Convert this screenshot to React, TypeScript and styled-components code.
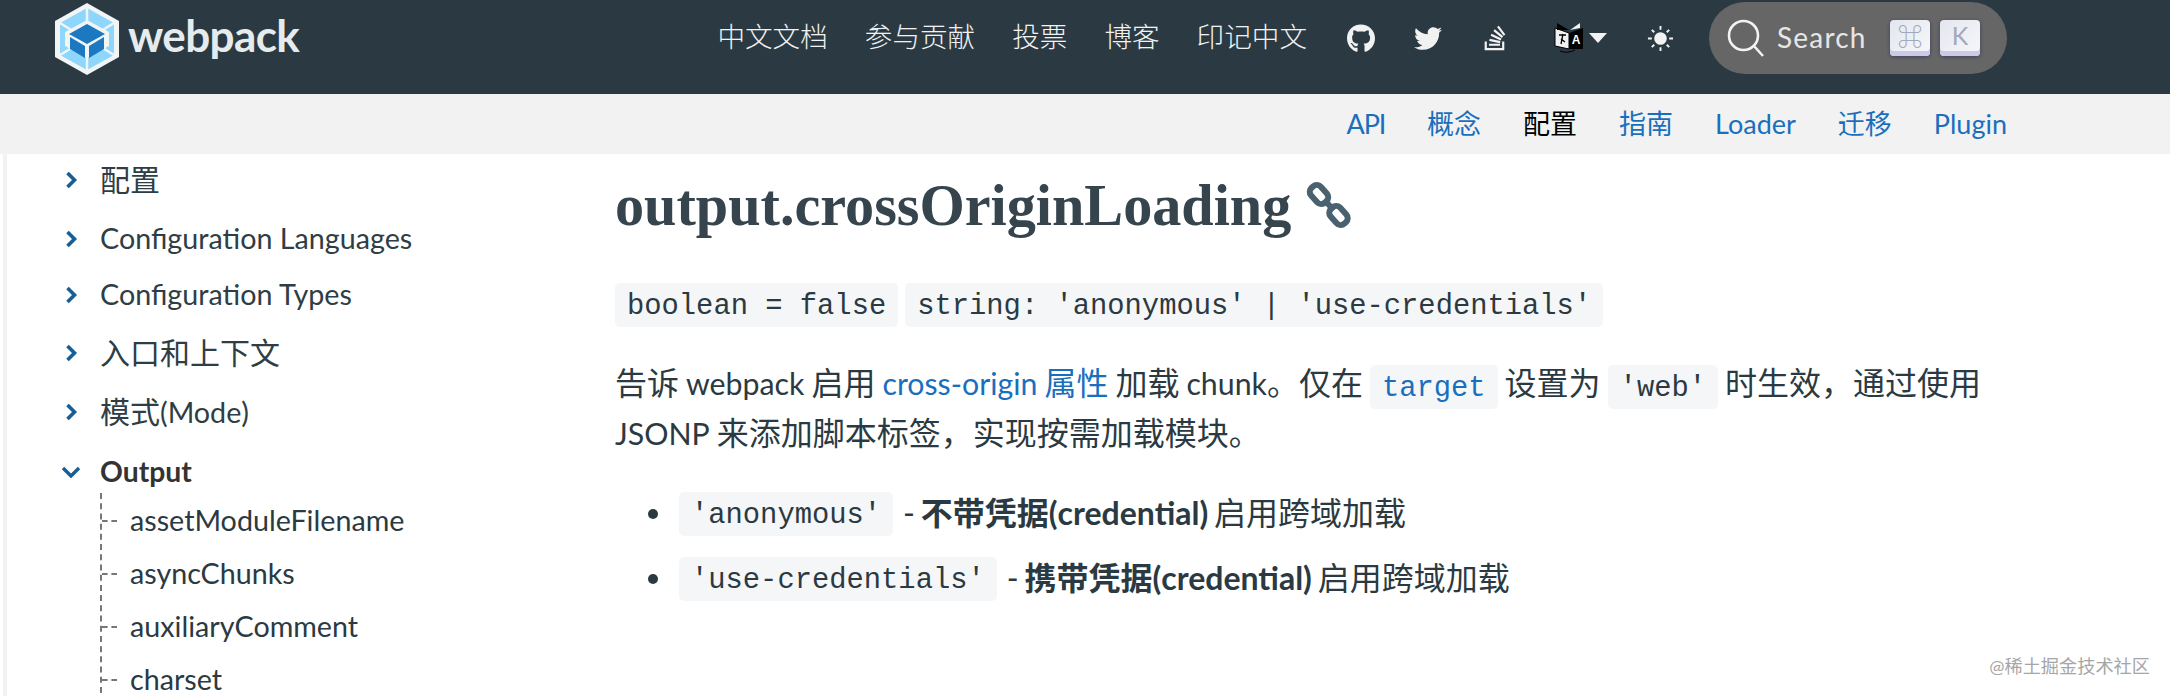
import React from 'react';
import styled, { createGlobalStyle } from 'styled-components';
import { FaGithub, FaTwitter, FaStackOverflow } from 'react-icons/fa';

const Sans = `"Lato", "Noto Sans CJK SC", sans-serif`;
const Global = createGlobalStyle`
  html, body { margin: 0; padding: 0; background: #fff; }
  body { width: 2170px; height: 696px; overflow: hidden; font-family: ${Sans}; }
  * { box-sizing: border-box; }
`;
const Page = styled.div`position: relative; width: 2170px; height: 696px; overflow: hidden; display: flex; flex-direction: column;`;
const Header = styled.header`
  height: 94px; flex: none; background: #2b3a42; display: flex; align-items: center; padding: 0 163px 18px 55px;
`;
const Logo = styled.div`display: flex; align-items: center; gap: 9px; margin-right: auto; margin-top: 1px;`;
const Wordmark = styled.span`
  font-family: "Lato", sans-serif; font-weight: 700; font-size: 44px; letter-spacing: -0.6px; line-height: 50px; color: #e6ecee; margin-top: -8px;
`;
const TopNav = styled.nav`display: flex; align-items: center; gap: 37px; margin-right: 40px; margin-top: -3px;`;
const TopLink = styled.a`font-size: 27.6px; line-height: 40px; color: #f2f2f2; font-weight: 300;`;
const IconRow = styled.div`display: flex; align-items: center; margin-right: 35px; color: #f2f2f2;`;
const IconSlot = styled.span<{ $w: number; $gap: number; $size?: number }>`
  display: flex; align-items: center; justify-content: center; width: ${p => p.$w}px; margin-right: ${p => p.$gap}px; font-size: ${p => p.$size ?? 29}px;
`;
const Caret = styled.span`width: 0; height: 0; border-left: 9px solid transparent; border-right: 9px solid transparent; border-top: 10px solid #f2f2f2; margin: 0 40px 0 5px;`;
const SearchPill = styled.div`
  width: 298px; height: 72px; border-radius: 36px; background: #666; display: flex; align-items: center; padding: 0 0 0 17px;
`;
const SearchLabel = styled.span`font-size: 28px; letter-spacing: 1.2px; line-height: 34px; margin: -3px 0 0 11px; color: #e6e6e6; width: 113px;`;
const Key = styled.kbd`
  width: 40px; height: 36px; margin-right: 10px; border-radius: 4px; display: flex; align-items: center; justify-content: center; padding-bottom: 6px;
  font-family: ${Sans}; font-size: 25px; font-weight: 700; color: #a3a9bd;
  background: linear-gradient(-225deg, #e3e6ee, #f7f8fa);
  box-shadow: inset 0 -5px 0 0 #cbcae6, 0 1px 3px 1px rgba(30,35,90,.35);
`;
const KeyLetter = styled.span`font-weight: 400;`;
const SubNav = styled.nav`
  height: 60px; flex: none; background: #f2f2f2; display: flex; justify-content: flex-end; align-items: center; gap: 42px; padding-right: 163px;
`;
const SubLink = styled.a<{ $active?: boolean; $tight?: boolean }>`
  font-size: 27px; line-height: 40px; color: ${p => p.$active ? '#000' : '#1a6fbd'}; letter-spacing: ${p => p.$tight ? '-1.2px' : '0'};
`;
const Body = styled.div`flex: 1; display: flex; min-height: 0;`;
const Side = styled.aside`
  width: 612px; flex: none; margin-left: 3px; border-left: 4px solid #f2f2f2; padding: 3px 0 0 58px;
`;
const SideRow = styled.div<{ $h: number; $bold?: boolean }>`
  display: flex; align-items: flex-start; height: ${p => p.$h}px; line-height: 44px; font-size: 30px; color: ${p => p.$bold ? '#333' : '#2f3d45'}; font-weight: ${p => p.$bold ? 700 : 400};
`;
const SideLatin = styled.span<{ $bold?: boolean }>`font-size: ${p => p.$bold ? 28.3 : 28.7}px;`;
const ChevronRight = styled.svg`width: 13px; height: 18px; margin: 14px 22px 0 0; flex: none;`;
const ChevronDown = styled.svg`width: 20px; height: 12px; margin: 17px 19px 0 -4px; flex: none;`;
const Tree = styled.div`margin-left: 35px; border-left: 2px dashed #777; height: 200px;`;
const TreeList = styled.div`margin-top: -6px;`;
const TreeRow = styled.div`
  height: 53px; display: flex; align-items: center; padding-left: 28px; font-size: 28.7px; color: #2b3a42; position: relative;
  &::before { content: ""; position: absolute; left: 0; top: 27px; width: 15px; border-top: 2px dashed #777; }
`;
const Main = styled.main`flex: 1; color: #2b3a42; min-width: 0;`;
const Title = styled.h1`
  margin: 16px 0 0; display: flex; align-items: center; gap: 14px; font-family: "Liberation Serif", serif; font-weight: 700; font-size: 58.2px; line-height: 72px; color: #36454d;
`;
const CodeRow = styled.div`display: flex; gap: 7px; margin-top: 41px;`;
const Code = styled.code`
  display: inline-block; font-family: "Liberation Mono", "DejaVu Sans Mono", monospace; font-size: 28.8px; line-height: 47px; height: 44px; padding: 0 12px; border-radius: 5px; background: #f5f6f8; color: #2b3a42; white-space: pre;
`;
const InlineCode = styled(Code)<{ $link?: boolean }>`
  vertical-align: middle; color: ${p => p.$link ? '#1a6fbd' : '#2b3a42'};
`;
const Para = styled.p`margin: 32px 0 0; font-size: 32px; line-height: 47px; word-spacing: -1.2px; color: #2b3a42; width: 1400px;`;
const Link = styled.a`color: #1a6fbd;`;
const Latin = styled.span`font-size: 30.3px;`;
const BoldLatin = styled.span`font-size: 32px;`;
const Bullets = styled.ul`margin: 25px 0 0; padding: 0 0 0 64px; list-style: none;`;
const Bullet = styled.li`
  display: flex; align-items: center; gap: 11px; height: 65px; font-size: 32px; position: relative;
  &::before { content: ""; position: absolute; left: -31px; top: 27px; width: 10px; height: 10px; border-radius: 50%; background: #2b3a42; }
  b { font-weight: 700; }
`;
const BulletText = styled.span`line-height: 44px; margin: -2px 0 0 -1px; word-spacing: -2.4px;`;
const Watermark = styled.div`position: absolute; right: 20px; top: 654px; font-size: 18.2px; color: #a6a6a6; line-height: 24px;`;

const Right = () => <ChevronRight viewBox="0 0 13 18"><path d="M2.5 2l7 7-7 7" fill="none" stroke="#175d96" strokeWidth="3.6" /></ChevronRight>;
const Down = () => <ChevronDown viewBox="0 0 20 12"><path d="M2 2l8 8 8-8" fill="none" stroke="#175d96" strokeWidth="3.4" /></ChevronDown>;

const WebpackLogo = () => (
  <svg width="64" height="72" viewBox="0 0 64 72">
    <path d="M32 0L64 18V54L32 72L0 54V18Z" fill="#f2f5f6" />
    <path d="M32 5L59 20V52L32 67L5 52V20Z" fill="#8ed6fb" />
    <path d="M32 5V20M59 20L46 28M5 20L18 28M32 67V52M59 52L46 44M5 52L18 44" stroke="#f2f5f6" strokeWidth="2.5" />
    <path d="M32 17L54 29V43L32 55L10 43V29Z" fill="#f2f5f6" />
    <path d="M32 21L50 31L32 41L14 31Z" fill="#1c78c0" />
    <path d="M15 34L30 43V55L15 46Z" fill="#1c78c0" />
    <path d="M49 34L34 43V55L49 46Z" fill="#1c78c0" />
  </svg>
);
const Translate = () => (
  <svg width="30" height="32" viewBox="0 0 30 32">
    <path d="M1 6L15 11V27L1 24Z" fill="#f2f2f2" stroke="#000" />
    <path d="M15 11L29 6V27L15 27Z" fill="#000" />
    <path d="M3 1L15 8H3Z" fill="#000" /><path d="M16 8L26 1V6Z" fill="#f2f2f2" />
    <text x="22" y="22" fontSize="12" fontWeight="700" textAnchor="middle" fill="#fff" fontFamily="Liberation Sans">A</text>
    <path d="M5 13h7M9 12l-2 10M7 17l4 3" stroke="#000" strokeWidth="1.3" fill="none" />
    <path d="M6 29q7 3 15-1" stroke="#000" strokeWidth="1" fill="none" />
  </svg>
);
const SunIcon = () => (
  <svg width="27" height="27" viewBox="0 0 28 28" fill="#f2f2f2" stroke="#f2f2f2" strokeWidth="2">
    <circle cx="14" cy="14" r="6.5" stroke="none" />
    <path d="M14 1v4M14 23v4M1 14h4M23 14h4M5 5l2.5 2.5M23 5l-2.5 2.5M5 23l2.5-2.5M23 23l-2.5-2.5" fill="none" />
  </svg>
);
const SearchIcon = () => (
  <svg width="40" height="40" viewBox="0 0 40 40" fill="none" stroke="#f2f2f2" strokeWidth="2.6"><circle cx="17.5" cy="17.5" r="14.5" /><path d="M28 28l9 10" /></svg>
);
const LinkIcon = () => (
  <svg width="48" height="50" viewBox="0 0 48 50" fill="none" stroke="#4a6170" strokeWidth="6" strokeLinecap="round">
    <rect x="4" y="7" width="20" height="13" rx="5.5" transform="rotate(48 14 13.5)" />
    <rect x="23.5" y="28" width="20" height="13" rx="5.5" transform="rotate(48 33.5 34.5)" />
    <path d="M21 21l6 6" />
  </svg>
);

export default function App() {
  return (
    <Page>
      <Global />
      <Header>
        <Logo><WebpackLogo /><Wordmark>webpack</Wordmark></Logo>
        <TopNav>
          {['中文文档', '参与贡献', '投票', '博客', '印记中文'].map(t => <TopLink key={t}>{t}</TopLink>)}
        </TopNav>
        <IconRow>
          <IconSlot $w={28} $gap={39}><FaGithub /></IconSlot>
          <IconSlot $w={28} $gap={42}><FaTwitter /></IconSlot>
          <IconSlot $w={22} $gap={48} $size={28}><FaStackOverflow /></IconSlot>
          <IconSlot $w={30} $gap={0}><Translate /></IconSlot>
          <Caret />
          <IconSlot $w={27} $gap={0}><SunIcon /></IconSlot>
        </IconRow>
        <SearchPill>
          <SearchIcon />
          <SearchLabel>Search</SearchLabel>
          <Key>⌘</Key><Key><KeyLetter>K</KeyLetter></Key>
        </SearchPill>
      </Header>
      <SubNav>
        <SubLink $tight>API</SubLink><SubLink>概念</SubLink><SubLink $active>配置</SubLink><SubLink>指南</SubLink><SubLink>Loader</SubLink><SubLink>迁移</SubLink><SubLink>Plugin</SubLink>
      </SubNav>
      <Body>
        <Side>
          <SideRow $h={59}><Right />配置</SideRow>
          <SideRow $h={56}><Right /><SideLatin>Configuration Languages</SideLatin></SideRow>
          <SideRow $h={58}><Right /><SideLatin>Configuration Types</SideLatin></SideRow>
          <SideRow $h={59}><Right />入口和上下文</SideRow>
          <SideRow $h={60}><Right /><span>模式<SideLatin>(Mode)</SideLatin></span></SideRow>
          <SideRow $h={50} $bold><Down /><SideLatin $bold>Output</SideLatin></SideRow>
          <Tree>
            <TreeList>
              {['assetModuleFilename', 'asyncChunks', 'auxiliaryComment', 'charset'].map(t => <TreeRow key={t}>{t}</TreeRow>)}
            </TreeList>
          </Tree>
        </Side>
        <Main>
          <Title>output.crossOriginLoading <LinkIcon /></Title>
          <CodeRow><Code>boolean = false</Code><Code>string: 'anonymous' | 'use-credentials'</Code></CodeRow>
          <Para>告诉 <Latin>webpack</Latin> 启用 <Link><Latin>cross-origin</Latin> 属性</Link> 加载 <Latin>chunk</Latin>。仅在 <InlineCode $link>target</InlineCode> 设置为 <InlineCode>'web'</InlineCode> 时生效，通过使用 <Latin>JSONP</Latin> 来添加脚本标签，实现按需加载模块。</Para>
          <Bullets>
            <Bullet><Code>'anonymous'</Code><BulletText>- <b>不带凭据<BoldLatin>(credential)</BoldLatin></b> 启用跨域加载</BulletText></Bullet>
            <Bullet><Code>'use-credentials'</Code><BulletText>- <b>携带凭据<BoldLatin>(credential)</BoldLatin></b> 启用跨域加载</BulletText></Bullet>
          </Bullets>
        </Main>
      </Body>
      <Watermark>@稀土掘金技术社区</Watermark>
    </Page>
  );
}
